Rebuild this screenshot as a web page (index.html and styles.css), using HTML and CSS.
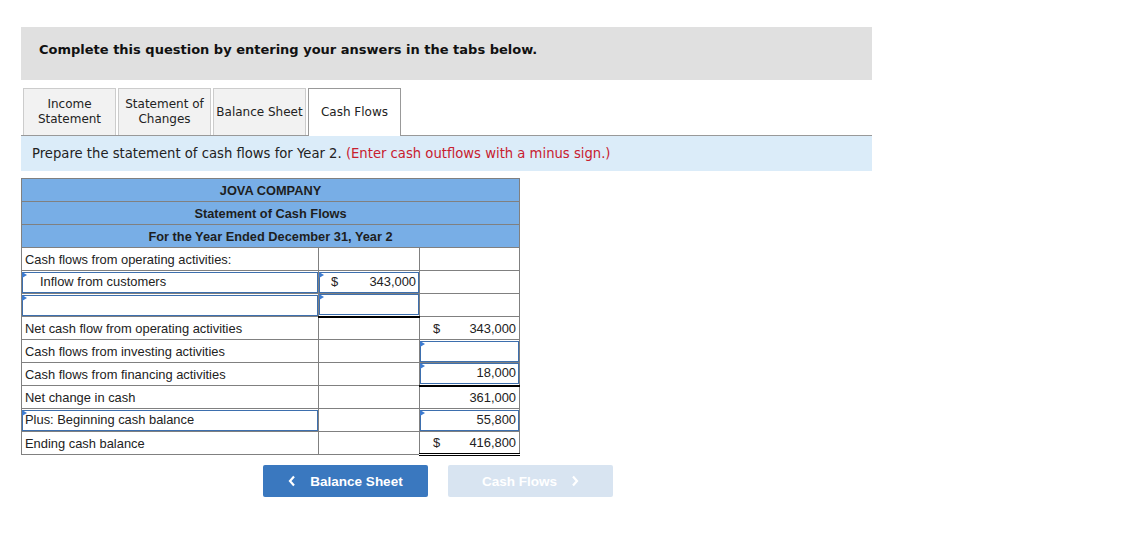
FILE: index.html
```html
<!DOCTYPE html>
<html>
<head>
<meta charset="utf-8">
<link rel="stylesheet" href="styles.css">
</head>
<body>
<div class="num">2.</div>
<div class="wrap">
  <div class="banner">Complete this question by entering your answers in the tabs below.</div>
  <div class="tabs">
    <div class="tab">Income<br>Statement</div>
    <div class="tab">Statement of<br>Changes</div>
    <div class="tab">Balance Sheet</div>
    <div class="tab active">Cash Flows</div>
  </div>
  <div class="instr">Prepare the statement of cash flows for Year 2. <span class="red">(Enter cash outflows with a minus sign.)</span></div>
  <table class="stmt">
    <colgroup><col class="c1"><col class="c2"><col class="c3"></colgroup>
    <tr class="hd"><td colspan="3">JOVA COMPANY</td></tr>
    <tr class="hd"><td colspan="3">Statement of Cash Flows</td></tr>
    <tr class="hd"><td colspan="3">For the Year Ended December 31, Year 2</td></tr>
    <tr><td><div class="txt">Cash flows from operating activities:</div></td><td></td><td></td></tr>
    <tr>
      <td><div class="inp flag"><span class="ind">Inflow from customers</span></div></td>
      <td><div class="inp flag amt"><span>$</span><span>343,000</span></div></td>
      <td></td>
    </tr>
    <tr>
      <td><div class="inp flag"></div></td>
      <td class="ul"><div class="inp flag"></div></td>
      <td></td>
    </tr>
    <tr><td><div class="txt">Net cash flow from operating activities</div></td><td></td><td><div class="txt amt"><span>$</span><span>343,000</span></div></td></tr>
    <tr><td><div class="txt">Cash flows from investing activities</div></td><td></td><td><div class="inp flag"></div></td></tr>
    <tr><td><div class="txt">Cash flows from financing activities</div></td><td></td><td class="ul"><div class="inp flag amt"><span></span><span>18,000</span></div></td></tr>
    <tr><td><div class="txt">Net change in cash</div></td><td></td><td><div class="txt amt"><span></span><span>361,000</span></div></td></tr>
    <tr><td><div class="inp flag"><span class="noind">Plus: Beginning cash balance</span></div></td><td></td><td><div class="inp flag amt"><span></span><span>55,800</span></div></td></tr>
    <tr><td><div class="txt">Ending cash balance</div></td><td></td><td class="dul"><div class="txt amt"><span>$</span><span>416,800</span></div></td></tr>
  </table>
  <div class="nav">
    <div class="btn prev"><svg width="8" height="12" viewBox="0 0 8 12"><path d="M6 1.5 L2 6 L6 10.5" fill="none" stroke="#fff" stroke-width="2.2"/></svg><span>Balance Sheet</span></div>
    <div class="btn next"><span>Cash Flows</span><svg width="8" height="12" viewBox="0 0 8 12"><path d="M2 1.5 L6 6 L2 10.5" fill="none" stroke="#fff" stroke-width="2.2"/></svg></div>
  </div>
</div>
</body>
</html>
```

FILE: styles.css
```css
html, body { margin: 0; padding: 0; background: #fff; }
body { font-family: "DejaVu Sans", Verdana, sans-serif; color: #222; }
.num { font-size: 13px; line-height: 14px; margin-top: -12px; padding-left: 19px; height: 14px; overflow: hidden; }
.wrap { margin-left: 21px; width: 851px; padding-top: 25px; }
.banner { background: #e0e0e0; height: 53px; box-sizing: border-box; padding: 14px 0 0 18px; font-size: 13px; font-weight: bold; color: #111; line-height: 17px; }
.tabs { display: flex; gap: 2px; margin-top: 8px; padding-left: 2px; border-bottom: 1px solid #999; height: 47px; }
.tab { width: 93px; box-sizing: border-box; height: 47px; border: 1px solid #ccc; border-bottom: none; background: #f2f2f2; font-size: 12px; line-height: 15px; text-align: center; display: flex; align-items: center; justify-content: center; color: #222; }
.tab.active { background: #fff; border: 1px solid #999; border-bottom: none; height: 48px; margin-bottom: -1px; position: relative; }
.instr { background: #dbecf9; height: 35px; box-sizing: border-box; padding: 10px 0 0 11px; font-size: 13.2px; line-height: 16px; color: #222; }
.red { color: #c8202f; }
.stmt { border-collapse: collapse; margin-top: 7px; width: 498px; table-layout: fixed; font-family: "Liberation Sans", Arial, sans-serif; font-size: 12.9px; color: #222; }
.c1 { width: 297px; } .c2 { width: 101px; } .c3 { width: 100px; }
.stmt td { border: 1px solid #808080; height: 23px; padding: 0; box-sizing: border-box; vertical-align: middle; }
.stmt tr.hd td { background: #78aee6; text-align: center; font-weight: bold; color: #1e1e1e; font-size: 12.8px; }
.txt { padding: 0 3px; line-height: 21px; }
.inp { position: relative; height: 21px; border: 1.5px solid #3d6fae; box-sizing: border-box; line-height: 18px; padding: 0 2px; }
.flag::before { content: ""; position: absolute; left: -1px; top: -1px; border-top: 3px solid transparent; border-bottom: 3px solid transparent; border-left: 5px solid #3d7bd0; }
.amt { display: flex; justify-content: space-between; padding-left: 11px; padding-right: 2px; }
.txt.amt { padding-left: 13px; padding-right: 3px; }
.ind { padding-left: 15px; }
.noind { padding-left: 0; }
.stmt td.ul { border-bottom: 2px solid #000; }
.stmt td.dul { border-bottom: 3px double #000; }
.nav { display: flex; gap: 20px; margin-top: 9px; padding-left: 242px; }
.btn { width: 165px; height: 32px; border-radius: 2px; display: flex; align-items: center; justify-content: center; gap: 14px; font-family: "Liberation Sans", Arial, sans-serif; font-weight: bold; font-size: 13.5px; color: #fff; }
.prev { background: #3a78bf; }
.next { background: #d8e4f1; }
```
